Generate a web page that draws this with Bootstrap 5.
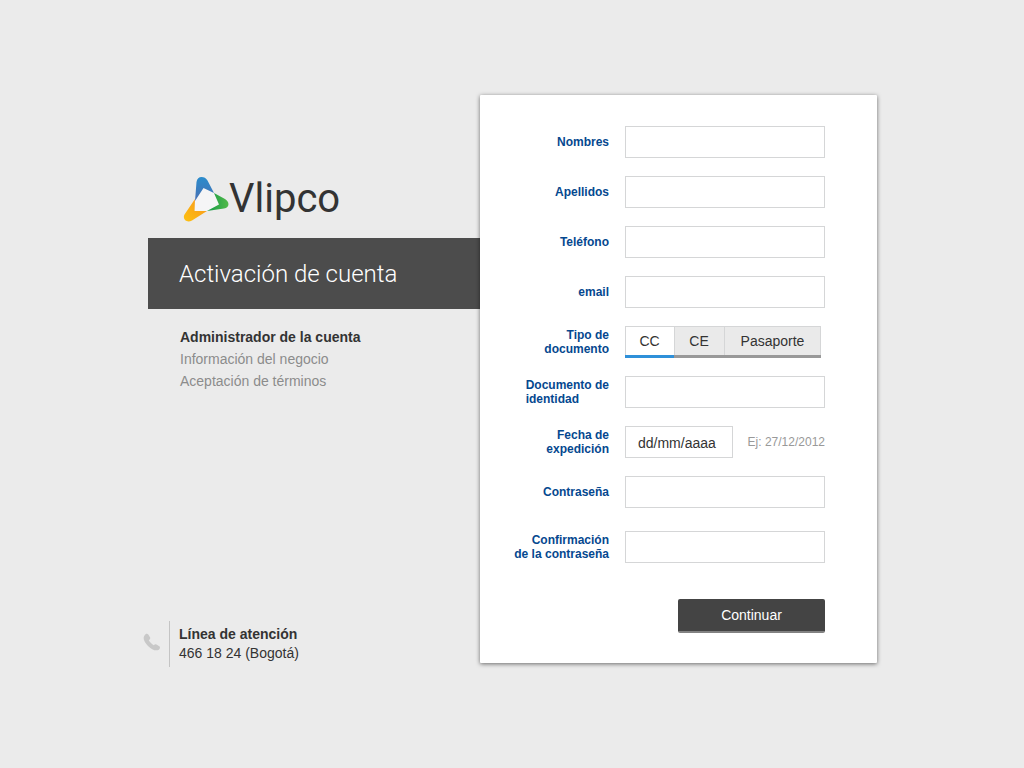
<!DOCTYPE html>
<html lang="es">
<head>
<meta charset="utf-8">
<meta name="viewport" content="width=device-width, initial-scale=1">
<title>Vlipco - Activación de cuenta</title>
<link href="https://cdn.jsdelivr.net/npm/bootstrap@5.3.0/dist/css/bootstrap.min.css" rel="stylesheet">
<style>
  body { background: #ebebeb; color: #333; font-family: "Liberation Sans", Arial, sans-serif; font-size: 14px; line-height: 22px; }
  .activation { max-width: 730px; padding: 95px 0 96px 1px; }
  .intro { padding-top: 82px; }
  .brand { padding-left: 35px; height: 61px; }
  .brand-name { font-family: Roboto, sans-serif; font-size: 40px; line-height: 44px; color: #333; }
  .banner { background: #4c4c4c; padding: 1px 31px 0; }
  .banner h1 { font-family: Roboto, sans-serif; font-weight: 300; font-size: 24px; line-height: 70px; color: #fff; }
  .steps { padding: 17px 32px 0; }
  .steps a { color: #8c8c8c; }
  .steps .current { color: #333; }
  .contact { margin-left: -5px; margin-top: 229px; line-height: 19px; }
  .contact svg { color: #c8c8c8; margin-top: 12px; }
  .contact-info { border-left: 1px solid #c4c4c4; padding: 4px 9px; }
  .form-panel { flex: 0 1 397px; background: #fff; padding: 31px 52px 30px 32px; border-radius: 1px; box-shadow: 0 1px 4px rgba(0,0,0,.55); }
  .fields { gap: 18px; }
  .field-row { display: grid; grid-template-columns: minmax(0, 1fr) 200px; column-gap: 16px; align-items: center; }
  .field-row > label, .field-row > .group-label { justify-self: end; color: #05488f; font-size: 12px; font-weight: 700; line-height: 14px; text-align: right; }
  .field-row > .label-start { text-align: left; }
  .field-row-spaced { margin-top: 5px; }
  .form-panel .form-control { height: 32px; border: 1px solid #d5d6d7; border-radius: 0; padding: 1px 12px 0; font-size: 14px; color: #333; }
  .form-panel .form-control::placeholder { color: #333; }
  .form-panel .date-box { width: 108px; }
  .hint { color: #999; font-size: 12px; white-space: nowrap; }
  .doc-type .btn { width: 50px; height: 32px; padding: 0; line-height: 30px; font-size: 14px; color: #333; background: #eaeaea; border: 0 solid #999; border-bottom-width: 3px; border-radius: 0; box-shadow: inset 1px 1px #d5d6d7; }
  .doc-type .btn:first-of-type { width: 49px; }
  .doc-type .btn:last-of-type { width: 97px; box-shadow: inset 1px 1px #d5d6d7, inset -1px 0 #d5d6d7; }
  .doc-type .btn-check:checked + .btn { color: #333; background: #fff; border-color: #2e90d9; }
  .btn-continue { width: 147px; height: 34px; margin-top: 36px; padding: 0; font-size: 14px; color: #fff; background: #444; border: 0; border-bottom: 2px solid #828282; border-radius: 2px; }
  .btn-continue:hover { color: #fff; background: #333; }
</style>
</head>
<body>
<main class="activation container-fluid d-flex align-items-start">
  <section class="intro flex-grow-1">
    <div class="brand d-flex align-items-start">
      <svg width="46" height="46" viewBox="0 0 46 46" aria-hidden="true">
        <defs>
          <linearGradient id="blue" x1="0" y1="0" x2="0" y2="1"><stop offset="0" stop-color="#2a8ccc"/><stop offset="1" stop-color="#4a6fb3"/></linearGradient>
          <linearGradient id="green" x1="0" y1="0" x2="1" y2="0"><stop offset="0" stop-color="#149a48"/><stop offset="1" stop-color="#52b948"/></linearGradient>
          <linearGradient id="gold" x1="1" y1="0" x2="0" y2="1"><stop offset="0" stop-color="#f7941e"/><stop offset="1" stop-color="#fdc110"/></linearGradient>
        </defs>
        <path fill="#f5f5f6" d="M12 24 20.500 11 31 16 36 27.500 24 34 12 34Z"/>
        <path fill="url(#blue)" d="M12 24 13.500 5C14 1.500 16 0 18.500 0S23 1 24.500 3.500L31 16 20.500 11Z"/>
        <path fill="url(#green)" d="M31 16 42 22C47 25 46.500 31 41 31.500L24 34 36 27.500Z"/>
        <path fill="url(#gold)" d="M12 22 11.500 34 24 34 9 43.500C4 46.500-1 42.500 1.500 37.500Z"/>
      </svg>
      <span class="brand-name">Vlipco</span>
    </div>
    <div class="banner"><h1 class="m-0">Activación de cuenta</h1></div>
    <ol class="steps list-unstyled m-0">
      <li><a href="#" class="current fw-bold text-decoration-none" aria-current="step">Administrador de la cuenta</a></li>
      <li><a href="#" class="text-decoration-none">Información del negocio</a></li>
      <li><a href="#" class="text-decoration-none">Aceptación de términos</a></li>
    </ol>
    <div class="contact d-flex align-items-start gap-2">
      <svg width="18" height="18" viewBox="0 0 18 18" fill="currentColor" aria-hidden="true"><path d="M1.500 2.500C2.500.5 4.500.3 5.300 1.500L7 4.300C7.600 5.500 7 6.500 5.800 7.300 7 9.300 8.700 11 10.800 12.200 11.700 11.200 12.500 11 13.500 11.500L16.300 13.300C17.500 14.200 17 15.800 15.800 16.700 13 18.500 8.500 16.500 5 12.900 1 8.700-.5 5 1.500 2.500Z"/></svg>
      <div class="contact-info"><strong class="d-block">Línea de atención</strong>466 18 24 (Bogotá)</div>
    </div>
  </section>
  <form class="form-panel">
    <div class="fields d-flex flex-column">
      <div class="field-row"><label for="nombres">Nombres</label><input class="form-control" id="nombres" type="text"></div>
      <div class="field-row"><label for="apellidos">Apellidos</label><input class="form-control" id="apellidos" type="text"></div>
      <div class="field-row"><label for="telefono">Teléfono</label><input class="form-control" id="telefono" type="tel"></div>
      <div class="field-row"><label for="email">email</label><input class="form-control" id="email" type="email"></div>
      <div class="field-row">
        <span class="group-label" id="tipo">Tipo de<br>documento</span>
        <div class="doc-type d-flex" role="group" aria-labelledby="tipo">
          <input class="btn-check" type="radio" name="tipo" id="cc" checked><label class="btn" for="cc">CC</label>
          <input class="btn-check" type="radio" name="tipo" id="ce"><label class="btn" for="ce">CE</label>
          <input class="btn-check" type="radio" name="tipo" id="pasaporte"><label class="btn" for="pasaporte">Pasaporte</label>
        </div>
      </div>
      <div class="field-row"><label class="label-start" for="documento">Documento de<br>identidad</label><input class="form-control" id="documento" type="text"></div>
      <div class="field-row">
        <label for="fecha">Fecha de<br>expedición</label>
        <div class="d-flex align-items-center justify-content-between">
          <input class="form-control date-box" id="fecha" type="text" placeholder="dd/mm/aaaa" aria-describedby="fecha-hint">
          <span class="hint" id="fecha-hint">Ej: 27/12/2012</span>
        </div>
      </div>
      <div class="field-row"><label for="clave">Contraseña</label><input class="form-control" id="clave" type="password"></div>
      <div class="field-row field-row-spaced"><label for="clave2">Confirmación<br>de la contraseña</label><input class="form-control" id="clave2" type="password"></div>
    </div>
    <div class="text-end"><button class="btn btn-continue" type="submit">Continuar</button></div>
  </form>
</main>
<script src="https://cdn.jsdelivr.net/npm/bootstrap@5.3.0/dist/js/bootstrap.bundle.min.js"></script>
</body>
</html>
